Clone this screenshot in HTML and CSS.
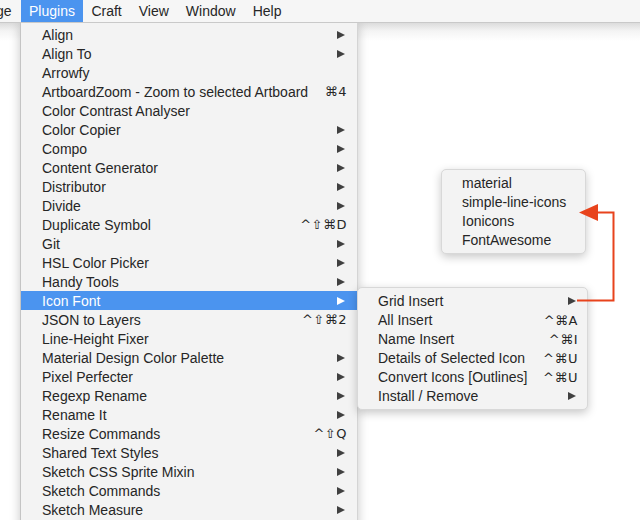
FILE: index.html
```html
<!DOCTYPE html>
<html>
<head>
<meta charset="utf-8">
<link rel="stylesheet" href="styles.css">
</head>
<body>
<div class="screen">
  <div class="menubar">
    <span class="mb-item mb-cut">ge</span>
    <span class="mb-item mb-active">Plugins</span>
    <span class="mb-item">Craft</span>
    <span class="mb-item">View</span>
    <span class="mb-item">Window</span>
    <span class="mb-item">Help</span>
  </div>
  <div class="desk"></div>

  <div class="menu main-menu">
    <div class="row"><span>Align</span><i class="arr"></i></div>
    <div class="row"><span>Align To</span><i class="arr"></i></div>
    <div class="row"><span>Arrowfy</span></div>
    <div class="row"><span>ArtboardZoom - Zoom to selected Artboard</span><span class="kbd">⌘4</span></div>
    <div class="row"><span>Color Contrast Analyser</span></div>
    <div class="row"><span>Color Copier</span><i class="arr"></i></div>
    <div class="row"><span>Compo</span><i class="arr"></i></div>
    <div class="row"><span>Content Generator</span><i class="arr"></i></div>
    <div class="row"><span>Distributor</span><i class="arr"></i></div>
    <div class="row"><span>Divide</span><i class="arr"></i></div>
    <div class="row"><span>Duplicate Symbol</span><span class="kbd">^⇧⌘D</span></div>
    <div class="row"><span>Git</span><i class="arr"></i></div>
    <div class="row"><span>HSL Color Picker</span><i class="arr"></i></div>
    <div class="row"><span>Handy Tools</span><i class="arr"></i></div>
    <div class="row sel"><span>Icon Font</span><i class="arr"></i></div>
    <div class="row"><span>JSON to Layers</span><span class="kbd">^⇧⌘2</span></div>
    <div class="row"><span>Line-Height Fixer</span></div>
    <div class="row"><span>Material Design Color Palette</span><i class="arr"></i></div>
    <div class="row"><span>Pixel Perfecter</span><i class="arr"></i></div>
    <div class="row"><span>Regexp Rename</span><i class="arr"></i></div>
    <div class="row"><span>Rename It</span><i class="arr"></i></div>
    <div class="row"><span>Resize Commands</span><span class="kbd">^⇧Q</span></div>
    <div class="row"><span>Shared Text Styles</span><i class="arr"></i></div>
    <div class="row"><span>Sketch CSS Sprite Mixin</span><i class="arr"></i></div>
    <div class="row"><span>Sketch Commands</span><i class="arr"></i></div>
    <div class="row"><span>Sketch Measure</span><i class="arr"></i></div>
  </div>

  <div class="menu sub-menu">
    <div class="row"><span>Grid Insert</span><i class="arr"></i></div>
    <div class="row"><span>All Insert</span><span class="kbd">^⌘A</span></div>
    <div class="row"><span>Name Insert</span><span class="kbd">^⌘I</span></div>
    <div class="row"><span>Details of Selected Icon</span><span class="kbd">^⌘U</span></div>
    <div class="row"><span>Convert Icons [Outlines]</span><span class="kbd">^⌘U</span></div>
    <div class="row"><span>Install / Remove</span><i class="arr"></i></div>
  </div>

  <div class="menu pop-menu">
    <div class="row"><span>material</span></div>
    <div class="row"><span>simple-line-icons</span></div>
    <div class="row"><span>Ionicons</span></div>
    <div class="row"><span>FontAwesome</span></div>
  </div>

  <svg class="callout" width="640" height="520" viewBox="0 0 640 520">
    <path d="M577 300.5 H613.5 V212.5 H596" fill="none" stroke="#e8431c" stroke-width="2"/>
    <polygon points="579,212.5 598,204 598,221" fill="#e8431c"/>
  </svg>
</div>
</body>
</html>
```

FILE: styles.css
```css
* { box-sizing: border-box; }
html, body { margin: 0; padding: 0; }
body {
  width: 640px;
  height: 520px;
  overflow: hidden;
  background: #fff;
  font-family: "Liberation Sans", Arial, sans-serif;
  font-size: 14px;
  color: #262626;
}
.screen {
  position: relative;
  width: 640px;
  height: 520px;
  overflow: hidden;
}
.menubar {
  height: 23px;
  background: #f6f6f6;
  border-bottom: 1px solid #c9c9c9;
  display: flex;
  align-items: stretch;
  position: relative;
  z-index: 3;
}
.mb-item {
  display: flex;
  align-items: center;
  padding: 0 8.5px;
  line-height: 22px;
}
.mb-cut { margin-left: -4px; padding: 0; width: 25px; }
.mb-active {
  background: #4b94ef;
  color: #fff;
  padding: 0 8px;
}
.desk {
  height: 497px;
  background: linear-gradient(#dcdcdc 0, #f4f4f4 8px, #fff 18px);
}
.menu {
  position: absolute;
  background: #f3f3f3;
  z-index: 2;
}
.main-menu {
  left: 20px;
  top: 22px;
  width: 338px;
  height: 520px;
  padding-top: 3px;
  border-left: 1px solid #c4c4c4;
  border-right: 1px solid #d4d4d4;
  box-shadow: 0 2px 10px rgba(0,0,0,0.22);
}
.row {
  height: 19px;
  display: flex;
  align-items: center;
  justify-content: space-between;
  padding: 0 10px 0 21px;
  white-space: nowrap;
}
.row.sel { background: #4b94ef; color: #fff; }
.kbd {
  font-family: "DejaVu Sans", "Liberation Sans", sans-serif;
  font-size: 13px;
  letter-spacing: 0.5px;
  color: #262626;
}
.arr {
  display: block;
  width: 0;
  height: 0;
  border-left: 8px solid #404040;
  border-top: 4.5px solid transparent;
  border-bottom: 4.5px solid transparent;
  margin-right: 2px;
}
.sel .arr { border-left-color: #fff; }
.sub-menu {
  left: 357px;
  top: 287px;
  width: 231px;
  height: 123px;
  padding: 3.5px 0 0;
  border-radius: 5px;
  border: 1px solid #d8d8d8;
  box-shadow: 0 3px 10px rgba(0,0,0,0.22);
  z-index: 4;
}
.sub-menu .row { padding-left: 20px; padding-right: 9px; }
.pop-menu {
  left: 441px;
  top: 169px;
  width: 145px;
  height: 85px;
  padding: 3px 0 0;
  border-radius: 5px;
  border: 1px solid #d8d8d8;
  box-shadow: 0 3px 10px rgba(0,0,0,0.22);
  z-index: 4;
}
.pop-menu .row { padding-left: 20px; }
.callout {
  position: absolute;
  left: 0;
  top: 0;
  z-index: 5;
  pointer-events: none;
}
```
